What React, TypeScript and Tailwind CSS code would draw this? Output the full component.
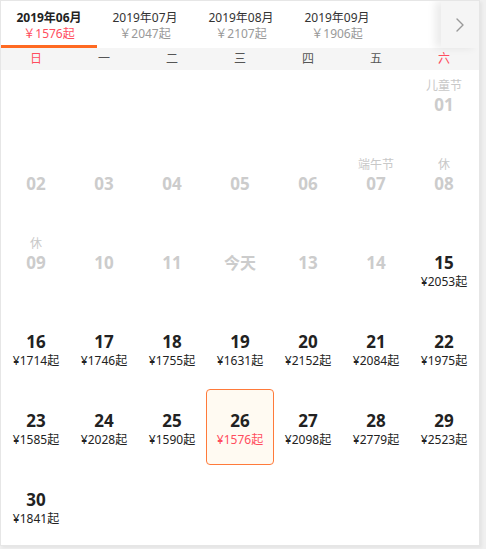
import { ChevronRight } from "lucide-react"

type Day = {
  day: string
  label?: string
  price?: string
  disabled?: boolean
  today?: boolean
  selected?: boolean
}

const months = [
  { title: "2019年06月", price: "￥1576起", active: true },
  { title: "2019年07月", price: "￥2047起" },
  { title: "2019年08月", price: "￥2107起" },
  { title: "2019年09月", price: "￥1906起" },
]

const weekdays = ["日", "一", "二", "三", "四", "五", "六"]

const prices: Record<number, string> = {
  15: "2053", 16: "1714", 17: "1746", 18: "1755", 19: "1631", 20: "2152", 21: "2084",
  22: "1975", 23: "1585", 24: "2028", 25: "1590", 26: "1576", 27: "2098", 28: "2779",
  29: "2523", 30: "1841",
}

const labels: Record<number, string> = { 1: "儿童节", 7: "端午节", 8: "休", 9: "休" }

function buildDays(): (Day | null)[] {
  const cells: (Day | null)[] = Array(6).fill(null)
  for (let d = 1; d <= 30; d++) {
    const day = d < 10 ? `0${d}` : `${d}`
    cells.push({
      day,
      label: labels[d],
      price: prices[d] ? `¥${prices[d]}起` : undefined,
      disabled: d < 15,
      today: d === 12,
      selected: d === 26,
    })
  }
  return cells
}

export default function App() {
  const days = buildDays()

  return (
    <div
      className="w-full h-screen bg-[#f0f0f0]"
      style={{ fontFamily: '"Noto Sans", "Noto Sans CJK SC", sans-serif' }}
    >
      <div className="w-[480px] h-[546px] bg-white border border-[#e6e6e6] shadow-[2px_2px_3px_rgba(0,0,0,0.05)] overflow-hidden">
        {/* Month tabs */}
        <div className="relative flex h-[47px]">
          {months.map((m) => (
            <div
              key={m.title}
              className={`w-[96px] flex flex-col items-center pt-[9px] border-b-[3px] ${m.active ? "border-[#ff6a22]" : "border-transparent"}`}
            >
              <span className={`text-[12px] leading-[16px] ${m.active ? "font-bold text-[#222]" : "text-[#333]"}`}>
                {m.title}
              </span>
              <span className={`text-[12px] leading-[16px] ${m.active ? "text-[#ff4d5e]" : "text-[#999]"}`}>
                {m.price}
              </span>
            </div>
          ))}
          <button className="absolute right-0 top-0 w-[38px] h-[47px] bg-[#f5f5f5] flex items-center justify-center shadow-[-6px_0_8px_rgba(0,0,0,0.08)]">
            <ChevronRight className="w-[24px] h-[24px] text-[#999]" strokeWidth={1.4} />
          </button>
        </div>

        {/* Weekday header */}
        <div className="grid grid-cols-7 h-[22px] bg-[#f5f5f5] px-[1px]">
          {weekdays.map((w, i) => (
            <div
              key={w}
              className={`flex items-center justify-center text-[12px] ${i === 0 || i === 6 ? "text-[#ff4d5e]" : "text-[#555]"}`}
            >
              {w}
            </div>
          ))}
        </div>

        {/* Days */}
        <div className="grid grid-cols-7 gap-y-[3px] pt-[3px] px-[1px]">
          {days.map((d, i) =>
            d ? (
              <div
                key={i}
                className={`h-[76px] flex flex-col items-center pt-[4px] rounded-[4px] border ${d.selected ? "bg-[#fffaf2] border-[#ff7a3a]" : "border-transparent"}`}
              >
                <span className="h-[17px] text-[12px] leading-[16px] text-[#c8c8c8]">{d.label ?? ""}</span>
                <span
                  className={`h-[20px] leading-[20px] font-bold ${d.today ? "text-[16px]" : "text-[17px]"} ${d.disabled ? "text-[#cccccc]" : "text-[#222]"}`}
                >
                  {d.today ? "今天" : d.day}
                </span>
                <span
                  className={`h-[18px] text-[12px] leading-[18px] ${d.selected ? "text-[#ff4d5e]" : "text-[#222]"}`}
                >
                  {d.price ?? ""}
                </span>
              </div>
            ) : (
              <div key={i} className="h-[76px]" />
            )
          )}
        </div>
      </div>
    </div>
  )
}
